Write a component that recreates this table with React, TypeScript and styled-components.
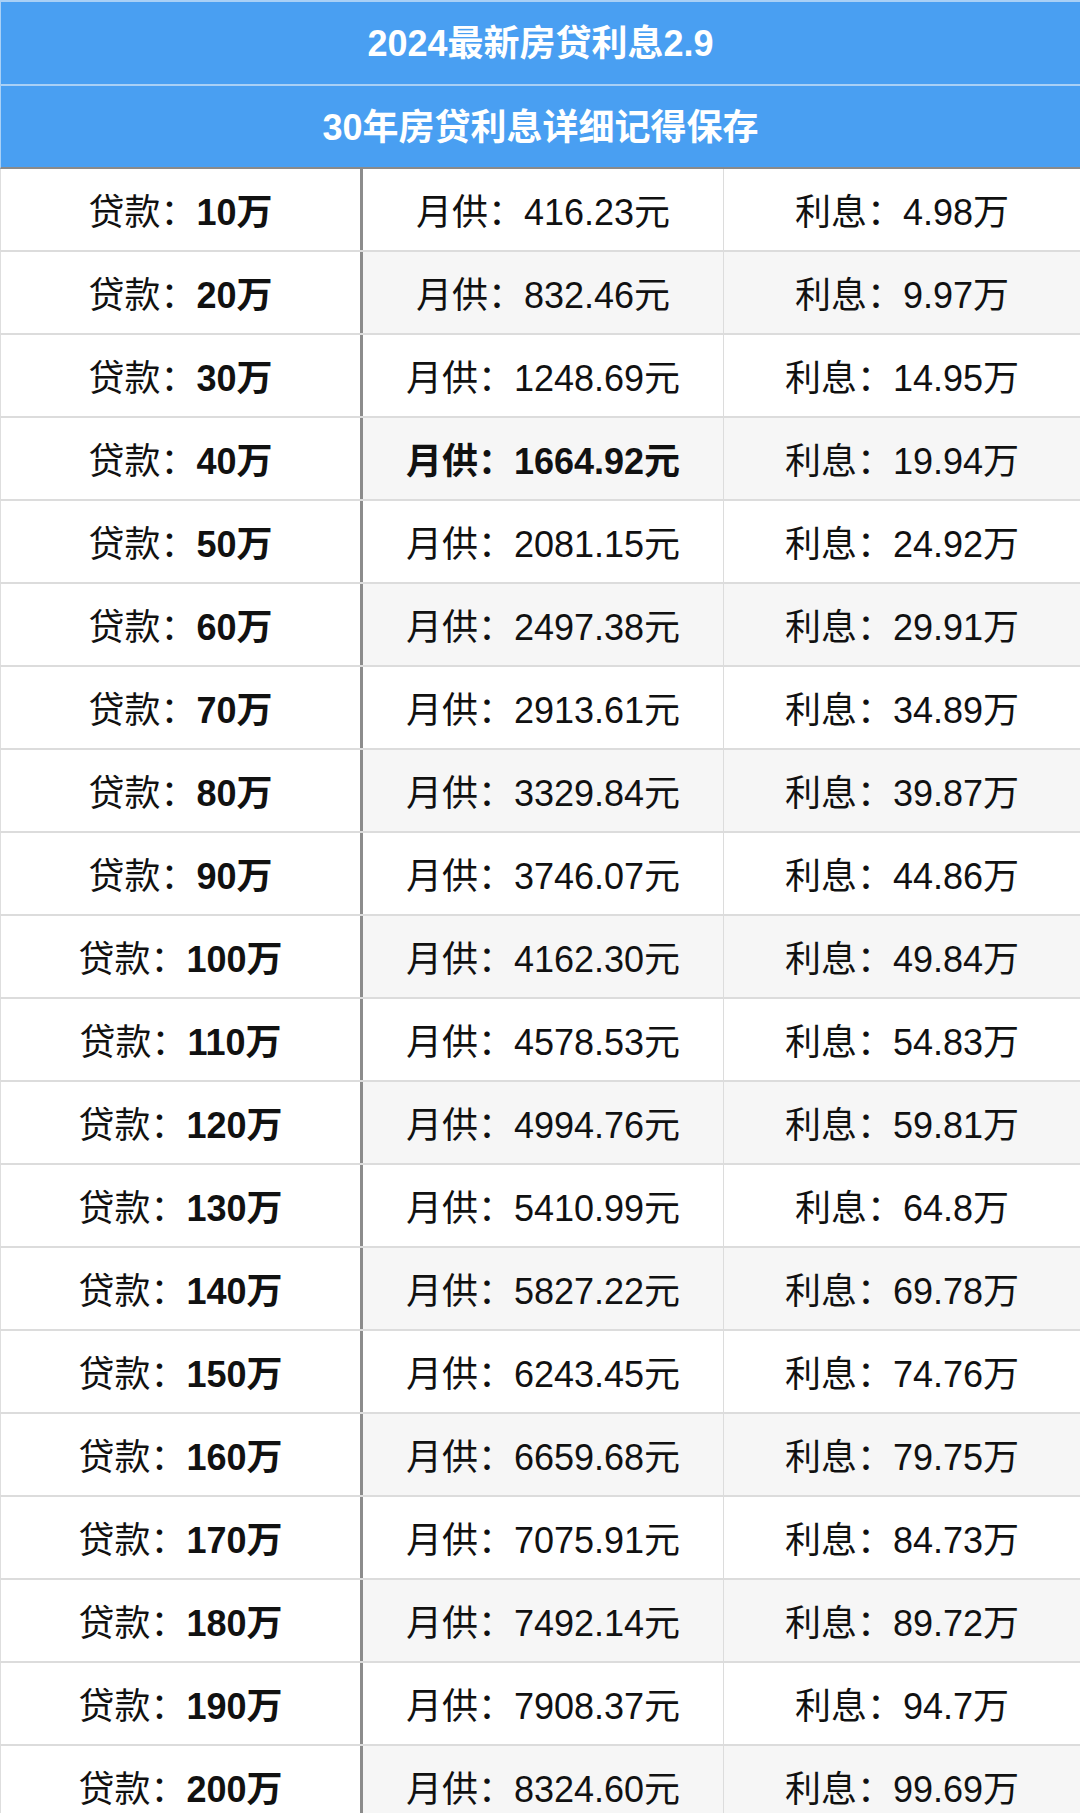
import React from "react";
import styled, { createGlobalStyle } from "styled-components";

const GlobalStyle = createGlobalStyle`
  html, body {
    margin: 0;
    padding: 0;
    background: #ffffff;
  }
  body {
    font-family: "Liberation Sans", "Noto Sans CJK SC", sans-serif;
    color: #111;
  }
`;

type Row = {
  loan: string;
  monthly: string;
  interest: string;
  strong?: boolean;
};

const rows: Row[] = [
  { loan: "10万", monthly: "416.23元", interest: "4.98万" },
  { loan: "20万", monthly: "832.46元", interest: "9.97万" },
  { loan: "30万", monthly: "1248.69元", interest: "14.95万" },
  { loan: "40万", monthly: "1664.92元", interest: "19.94万", strong: true },
  { loan: "50万", monthly: "2081.15元", interest: "24.92万" },
  { loan: "60万", monthly: "2497.38元", interest: "29.91万" },
  { loan: "70万", monthly: "2913.61元", interest: "34.89万" },
  { loan: "80万", monthly: "3329.84元", interest: "39.87万" },
  { loan: "90万", monthly: "3746.07元", interest: "44.86万" },
  { loan: "100万", monthly: "4162.30元", interest: "49.84万" },
  { loan: "110万", monthly: "4578.53元", interest: "54.83万" },
  { loan: "120万", monthly: "4994.76元", interest: "59.81万" },
  { loan: "130万", monthly: "5410.99元", interest: "64.8万" },
  { loan: "140万", monthly: "5827.22元", interest: "69.78万" },
  { loan: "150万", monthly: "6243.45元", interest: "74.76万" },
  { loan: "160万", monthly: "6659.68元", interest: "79.75万" },
  { loan: "170万", monthly: "7075.91元", interest: "84.73万" },
  { loan: "180万", monthly: "7492.14元", interest: "89.72万" },
  { loan: "190万", monthly: "7908.37元", interest: "94.7万" },
  { loan: "200万", monthly: "8324.60元", interest: "99.69万" },
];

const App = () => {
  return (
    <>
      <GlobalStyle />
      <Page>
        <TitleBar $first>2024最新房贷利息2.9</TitleBar>
        <TitleBar>30年房贷利息详细记得保存</TitleBar>
        <Table>
          {rows.map((row, nIndex) => (
            <TableRow key={nIndex}>
              <LoanCell>
                <span>贷款：</span>
                <LoanAmount>{row.loan}</LoanAmount>
              </LoanCell>
              <Cell $shaded={nIndex % 2 === 1} $strong={row.strong} $divider>
                月供：{row.monthly}
              </Cell>
              <Cell $shaded={nIndex % 2 === 1}>利息：{row.interest}</Cell>
            </TableRow>
          ))}
        </Table>
      </Page>
    </>
  );
};

const Page = styled.div`
  width: 1080px;
  height: 1813px;
  overflow: hidden;
  display: flex;
  flex-direction: column;
`;

const TitleBar = styled.div<{ $first?: boolean }>`
  box-sizing: border-box;
  height: ${(p) => (p.$first ? "84px" : "85px")};
  flex-shrink: 0;
  display: flex;
  align-items: center;
  justify-content: center;
  padding-bottom: 6px;
  background: #499ff2;
  color: #ffffff;
  font-size: 36px;
  font-weight: 700;
  border-top: 2px solid #a9d0f6;
  border-left: 1px solid #a9d0f6;
  border-bottom: ${(p) => (p.$first ? "none" : "2px solid #8a8a8a")};
`;

const Table = styled.div`
  display: flex;
  flex-direction: column;
`;

const TableRow = styled.div`
  box-sizing: border-box;
  height: 83px;
  flex-shrink: 0;
  display: grid;
  grid-template-columns: 363px 361px 1fr;
  border-bottom: 2px solid #dcdcdc;
`;

const LoanCell = styled.div`
  box-sizing: border-box;
  display: flex;
  align-items: center;
  justify-content: center;
  font-size: 36px;
  font-weight: 400;
  color: #111;
  background: #ffffff;
  border-left: 1px solid #dedede;
  border-right: 3px solid #8c8c8c;
  padding-bottom: 2px;
`;

const LoanAmount = styled.span`
  font-weight: 700;
`;

const Cell = styled.div<{ $shaded?: boolean; $strong?: boolean; $divider?: boolean }>`
  box-sizing: border-box;
  display: flex;
  align-items: center;
  justify-content: center;
  font-size: 36px;
  font-weight: ${(p) => (p.$strong ? 700 : 400)};
  color: #111;
  background: ${(p) => (p.$shaded ? "#f6f6f6" : "#ffffff")};
  border-right: ${(p) => (p.$divider ? "1px solid #dcdcdc" : "none")};
  padding-bottom: 2px;
`;

export default App;
